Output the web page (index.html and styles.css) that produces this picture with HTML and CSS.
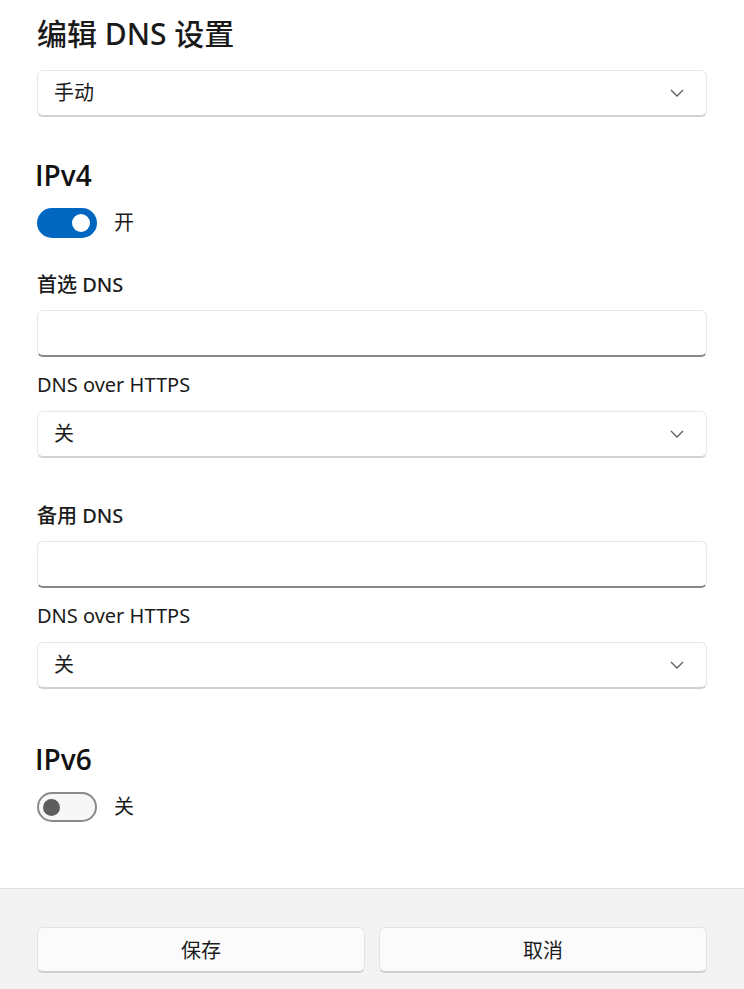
FILE: index.html
```html
<!DOCTYPE html>
<html lang="zh-CN">
<head>
<meta charset="utf-8">
<title>编辑 DNS 设置</title>
<link rel="stylesheet" href="styles.css">
</head>
<body>
<div class="page">
  <main class="content">
    <h1 class="title">编辑 DNS 设置</h1>
    <div class="select select-mode">
      <span class="select-text">手动</span>
      <svg class="chevron" width="14" height="8" viewBox="0 0 14 8"><polyline points="1,1 7,7 13,1" fill="none" stroke="#5d5d5d" stroke-width="1.3"/></svg>
    </div>

    <h2 class="section-title ipv4">IPv4</h2>
    <div class="toggle-row">
      <span class="toggle on"><span class="knob"></span></span>
      <span class="toggle-label">开</span>
    </div>

    <div class="group first">
      <div class="label strong">首选 DNS</div>
      <div class="input"></div>
      <div class="label">DNS over HTTPS</div>
      <div class="select">
        <span class="select-text">关</span>
        <svg class="chevron" width="14" height="8" viewBox="0 0 14 8"><polyline points="1,1 7,7 13,1" fill="none" stroke="#5d5d5d" stroke-width="1.3"/></svg>
      </div>
    </div>

    <div class="group second">
      <div class="label strong">备用 DNS</div>
      <div class="input"></div>
      <div class="label">DNS over HTTPS</div>
      <div class="select">
        <span class="select-text">关</span>
        <svg class="chevron" width="14" height="8" viewBox="0 0 14 8"><polyline points="1,1 7,7 13,1" fill="none" stroke="#5d5d5d" stroke-width="1.3"/></svg>
      </div>
    </div>

    <h2 class="section-title ipv6">IPv6</h2>
    <div class="toggle-row">
      <span class="toggle off"><span class="knob"></span></span>
      <span class="toggle-label">关</span>
    </div>
  </main>
  <footer class="footer">
    <button class="btn" type="button">保存</button>
    <button class="btn" type="button">取消</button>
  </footer>
</div>
</body>
</html>
```

FILE: styles.css
```css
* { box-sizing: border-box; }
html, body { margin: 0; padding: 0; background: #ffffff; }
body {
  font-family: "Noto Sans", "Noto Sans CJK SC", sans-serif;
  color: #1b1b1b;
  font-size: 20px;
}
.page {
  display: flex;
  flex-direction: column;
  height: 989px;
}
.content {
  flex: 1;
  display: flex;
  flex-direction: column;
  padding: 14px 37px 0 37px;
}
.title {
  margin: 0;
  font-size: 30px;
  line-height: 40px;
  font-weight: 500;
  color: #1a1a1a;
}
.select {
  height: 47px;
  border: 1px solid #e6e6e6;
  border-bottom: 2px solid #d2d2d2;
  border-radius: 6px;
  background: #fff;
  display: flex;
  align-items: center;
  justify-content: space-between;
  padding: 0 22px 0 16px;
}
.select-mode { margin-top: 16px; }
.select-text { font-size: 20px; line-height: 28px; }
.chevron { display: block; }
.section-title {
  margin: 0;
  font-family: "Open Sans", "Noto Sans CJK SC", sans-serif;
  font-size: 28px;
  line-height: 40px;
  font-weight: 600;
  color: #111;
  margin-left: -2px;
}
.ipv4 { margin-top: 38px; }
.ipv6 { margin-top: 50px; }
.toggle-row {
  display: flex;
  align-items: center;
  gap: 17px;
  margin-top: 13px;
  height: 30px;
}
.toggle {
  width: 60px;
  height: 30px;
  border-radius: 15px;
  display: flex;
  align-items: center;
}
.toggle.on {
  background: #0067c0;
  justify-content: flex-end;
  padding-right: 7px;
}
.toggle.on .knob {
  width: 18px;
  height: 18px;
  border-radius: 50%;
  background: #ffffff;
}
.toggle.off {
  background: #f7f7f7;
  border: 2px solid #8a8a8a;
  padding-left: 4px;
}
.toggle.off .knob {
  width: 17px;
  height: 17px;
  border-radius: 50%;
  background: #5d5d5d;
}
.toggle-label { font-size: 20px; line-height: 28px; }
.group { display: flex; flex-direction: column; }
.group.first { margin-top: 32px; }
.group.second { margin-top: 43px; }
.label {
  font-size: 20px;
  line-height: 30px;
}
.label.strong { font-weight: 500; }
.input {
  margin-top: 10px;
  margin-bottom: 13px;
  height: 47px;
  border: 1px solid #e6e6e6;
  border-bottom: 2px solid #878787;
  border-radius: 6px;
  background: #fff;
}
.label + .select { margin-top: 11px; }
.footer {
  height: 101px;
  background: #f3f3f3;
  border-top: 1px solid #e2e2e2;
  display: flex;
  gap: 14px;
  padding: 38px 37px 0 37px;
}
.btn {
  flex: 1;
  height: 46px;
  background: #fbfbfb;
  border: 1px solid #e3e3e3;
  border-bottom: 2px solid #cfcfcf;
  border-radius: 6px;
  font-family: "Noto Sans", "Noto Sans CJK SC", sans-serif;
  font-size: 20px;
  color: #1b1b1b;
  padding: 0;
}
```
